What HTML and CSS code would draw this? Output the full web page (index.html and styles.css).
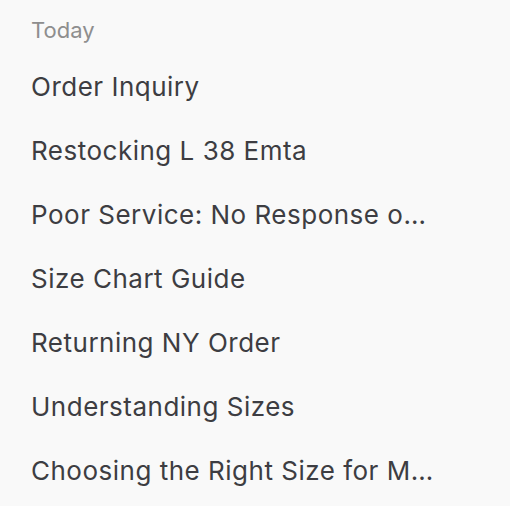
FILE: index.html
```html
<!DOCTYPE html>
<html lang="en">
<head>
<meta charset="utf-8">
<link rel="stylesheet" href="styles.css">
</head>
<body>
<nav class="history">
  <div class="group-label">Today</div>
  <ul class="list">
    <li class="item">Order Inquiry</li>
    <li class="item">Restocking L 38 Emta</li>
    <li class="item">Poor Service: No Response on Order Status Update</li>
    <li class="item">Size Chart Guide</li>
    <li class="item">Returning NY Order</li>
    <li class="item">Understanding Sizes</li>
    <li class="item">Choosing the Right Size for My Order</li>
  </ul>
</nav>
</body>
</html>
```
FILE: styles.css
```css
html, body {
  margin: 0;
  padding: 0;
  background: #f9f9f9;
}
body {
  font-family: Inter, "Noto Sans", sans-serif;
  -webkit-font-smoothing: antialiased;
}
.history {
  padding: 0 0 0 31px;
  width: 404px;
}
.group-label {
  height: 55px;
  display: flex;
  align-items: center;
  padding-top: 5px;
  box-sizing: border-box;
  font-size: 22px;
  color: #8e8e8e;
}
.list {
  list-style: none;
  margin: 0;
  padding: 0;
}
.item {
  height: 64px;
  line-height: 64px;
  font-size: 26px;
  letter-spacing: 0.5px;
  color: #3d3d42;
  white-space: nowrap;
  overflow: hidden;
  text-overflow: ellipsis;
}
```
